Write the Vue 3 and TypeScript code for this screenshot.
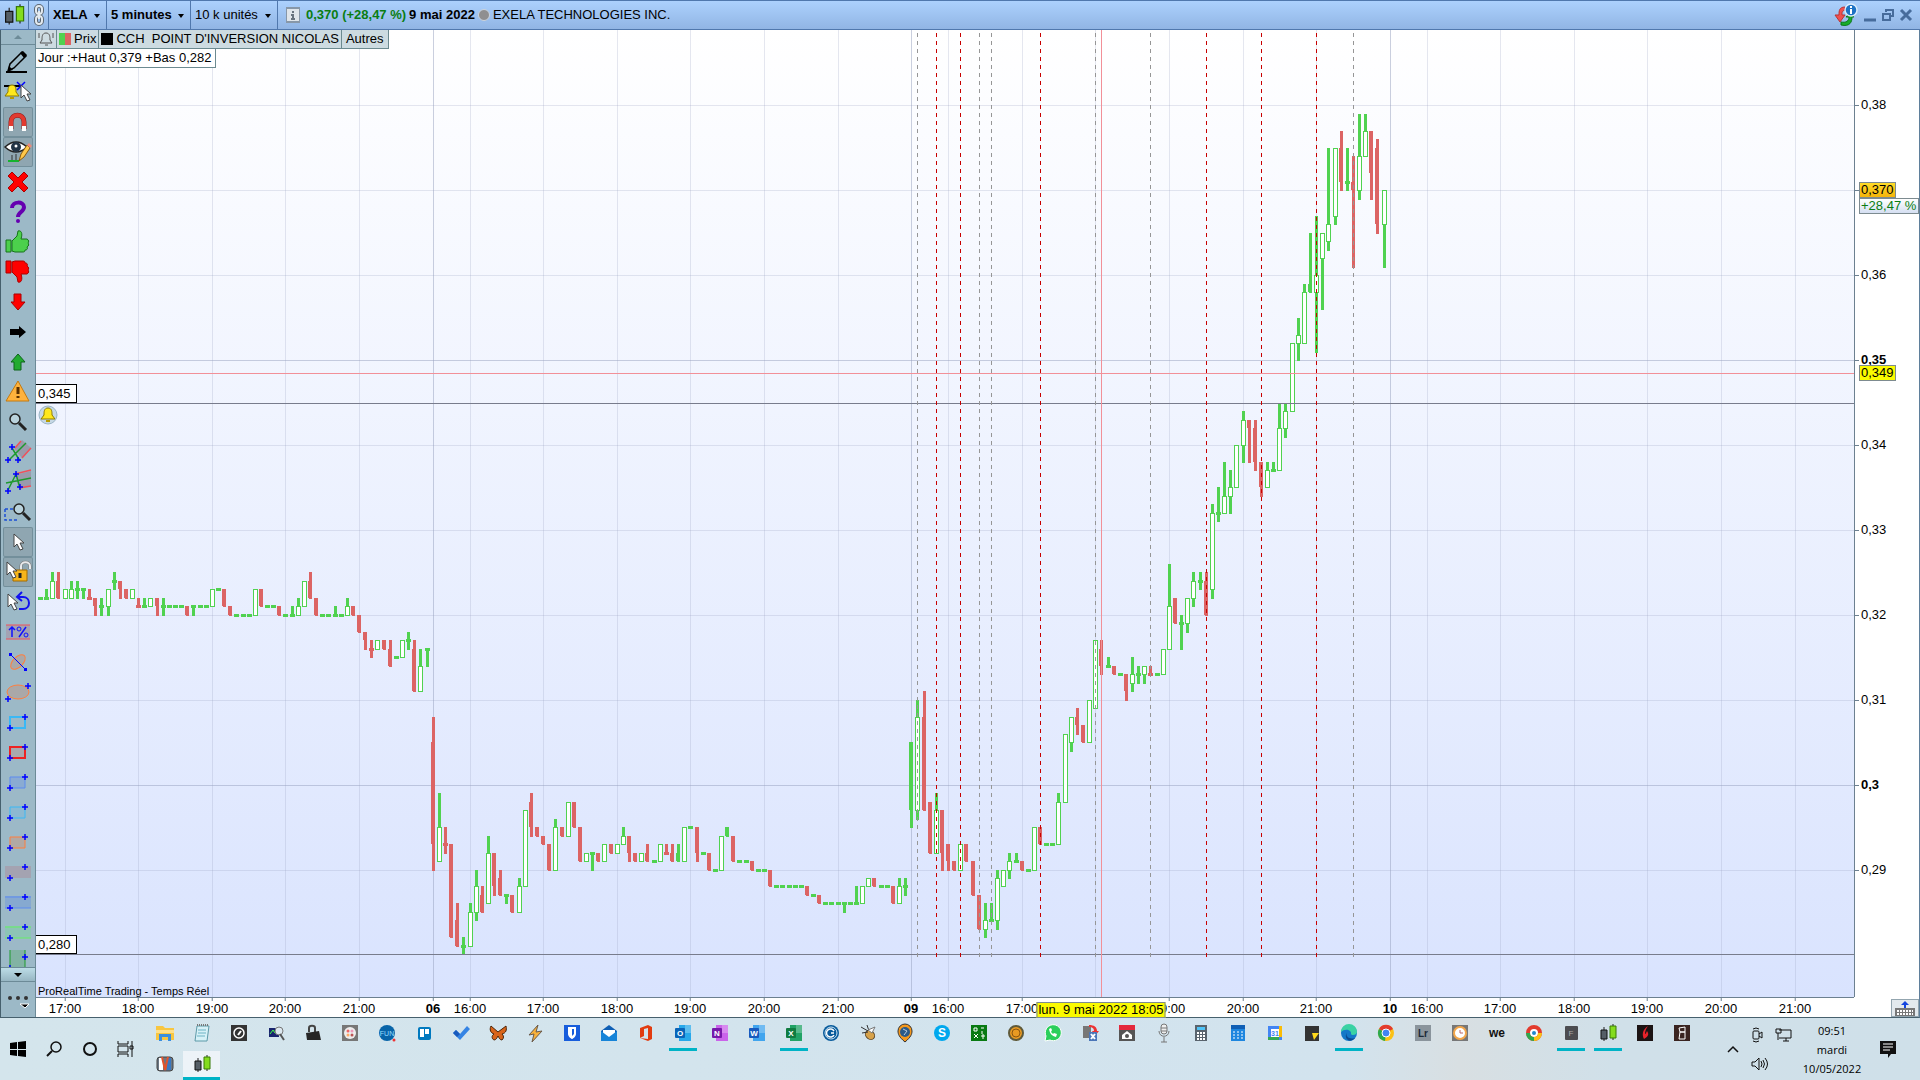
<script setup lang="ts">
import { ref } from 'vue'

type Kind = 'u' | 'd' | 'f'
interface Candle { i: number; kind: Kind; high: number; low: number; top: number; bottom: number }
interface Tool { name: string; art: string; on?: boolean }
interface App { name: string; art: string; open?: boolean }

/* One bar per entry: kind, high, body top, body bottom, low (thousandths).
   u = hollow rising, d = falling, f = filled rising. A bare number is a flat bar. */
const series =
  '322 u323,322,322,322 u325,324,322,322 d325,324,322,322 u323,323,322,322 u324,323,322,322 u324,323,323,322 u323,323,323,322 ' +
  'd323,322,322,322 d322,322,321,320 u322,321,321,320 u323,323,321,320 u325,324,324,323 d324,324,323,322 d323,323,322,322 u323,323,322,322 ' +
  'd322,321,321,321 u322,321,321,321 u322,322,321,321 d322,322,321,320 u322,321,321,320 321 321 321 d321,321,320,320 u321,321,321,320 321 321 ' +
  'u323,323,321,321 323 d323,323,321,321 d321,321,320,320 320 320 320 u323,323,320,320 d323,323,321,321 321 321 d321,321,320,320 320 ' +
  'u321,320,320,320 u322,321,320,320 u324,324,321,321 d325,324,322,322 d322,322,320,320 320 320 u321,320,320,320 320 u322,321,320,320 ' +
  'd321,321,320,320 d320,320,318,318 d318,318,317,316 d317,316,316,315 u317,317,316,316 d317,317,316,316 d317,316,314,314 315 ' +
  'u317,317,315,315 u318,317,317,316 d317,316,311,311 u316,314,311,311 u316,316,316,314 ' +
  'd308,305,293,290 u299,295,291,291 d295,293,293,292 d293,293,282,282 d286,284,281,281 u282,281,281,280 u286,285,281,281 u290,288,285,284 ' +
  'd288,287,285,285 u294,292,286,286 d292,292,288,287 d290,289,287,287 u287,287,287,286 d287,287,285,285 u289,288,285,285 u297,297,288,288 ' +
  'd299,298,295,294 d295,295,294,294 d294,294,293,293 d293,293,290,290 u296,295,290,290 d295,295,294,294 u298,298,294,294 d298,298,295,295 ' +
  'd295,295,291,291 u292,292,291,291 u292,292,292,290 d292,292,291,291 u293,293,291,291 d293,293,292,292 u293,293,292,292 u295,294,293,293 ' +
  'd294,294,292,291 d292,292,291,291 u292,292,291,291 d293,292,291,291 291 u293,293,291,291 d293,292,292,292 d293,292,291,291 f293,292,291,291 ' +
  'u295,295,291,291 295 d295,295,292,291 292 d292,292,290,290 290 u294,294,290,290 f295,295,294,294 d294,294,291,291 291 291 d291,291,290,290 ' +
  '290 290 d290,290,288,288 288 288 288 288 288 d288,288,287,287 287 d287,287,286,286 286 286 286 u286,286,286,285 286 u288,286,286,286 ' +
  'u288,288,286,286 u289,289,288,288 d289,289,288,288 288 288 d288,288,286,286 u289,288,286,286 u289,288,288,287 ' +
  'f305,305,297,295 u310,308,297,296 d311,308,297,297 d298,298,292,292 u299,297,292,292 d297,297,292,290 d293,293,291,290 d291,291,290,290 ' +
  'u293,293,290,290 d293,293,291,291 d291,291,287,287 d287,287,283,283 u286,284,283,282 u286,284,284,284 u290,289,284,283 u290,290,288,288 ' +
  'u292,291,290,289 u292,291,291,291 d291,291,290,290 290 u295,295,290,290 d295,295,293,293 293 293 u299,298,293,293 u306,306,298,298 ' +
  'u308,308,305,304 d309,308,307,306 d307,307,305,305 u310,310,305,305 u317,317,309,309 d317,316,314,313 u315,314,314,314 d314,314,313,313 ' +
  '313 d313,313,311,310 u315,313,312,311 u314,313,313,312 u314,314,313,312 d314,313,313,313 313 u316,316,313,313 u326,321,316,316 ' +
  'd322,322,319,319 u320,319,319,316 u322,322,319,318 u325,324,322,321 u325,324,324,323 d325,324,320,320 u333,332,323,322 u335,332,332,331 ' +
  'u338,334,332,332 u337,335,334,332 u340,340,335,335 u344,343,340,338 d343,343,342,338 d343,342,338,337 d338,338,335,334 u338,337,335,335 ' +
  'u338,337,337,337 u345,342,337,337 u345,344,342,341 u352,352,344,344 u355,353,352,350 u359,358,352,352 f365,359,358,358 u367,360,358,351 ' +
  'u365,365,362,356 u375,366,364,363 u375,375,367,366 d377,375,371,370 u375,371,371,370 d374,371,370,361 u379,374,370,369 u379,377,374,374 ' +
  'd377,377,372,369 d376,375,366,365 u370,370,366,361'

const FIRST = -64
const candles: Candle[] = series.split(' ').map((s, n) => {
  const kind = (/^[udf]/.test(s) ? s[0] : 'u') as Kind
  const v = s.replace(/^[udf]/, '').split(',').map(Number)
  const [high, top, bottom, low] = v.length === 1 ? [v[0], v[0], v[0], v[0]] : v
  return { i: n + FIRST, kind, high, top, bottom, low }
})

/* Plot coordinate system */
const W = 1818
const H = 967
const px = (i: number) => Math.floor(397.2 + 6.135 * i)
const py = (t: number) => Math.floor(755.1 - (t - 300) * 8.49)
const pctX = (i: number) => (px(i) / W) * 100 + '%'
const pctY = (t: number) => (py(t) / H) * 100 + '%'

const hourTicks: { i: number; label: string; day?: boolean }[] = []
for (let h = 0; h < 5; h++) hourTicks.push({ i: -60 + h * 12, label: `${17 + h}:00` })
;['06', '09', '10'].forEach((d, n) => {
  hourTicks.push({ i: n * 78, label: d, day: true })
  for (let h = 0; h < 6; h++) hourTicks.push({ i: n * 78 + 6 + h * 12, label: `${16 + h}:00` })
})
/* The hour next to the pointer is covered by its date flag */
const POINTER = 109
const hourLabels = hourTicks.filter((h) => Math.abs(h.i - POINTER) > 3)

const priceTicks = [380, 370, 360, 350, 340, 330, 320, 310, 300, 290].map((t) => ({
  t,
  label: t === 370 ? '' : ('0,' + t / 10).replace('0,30', '0,3'),
  strong: t === 350 || t === 300,
}))

const greyMarks = [79, 89, 91, 108, 117, 150]
const redMarks = [82, 86, 99, 126, 135, 144]

/* Drawing toolbar */
const plus = (x: number, y: number) => `<path d="M${x - 3} ${y}h6M${x} ${y - 3}v6" stroke="#00f" stroke-width="1.5"/>`
const box = (stroke: string, fill: string, w = 1) =>
  `<path d="M7 10h15v11H7z" fill="${fill}" stroke="${stroke}" stroke-width="${w}"/>${plus(22, 10)}${plus(7, 21)}`
const cursor = (x: number, y: number) =>
  `<path d="M${x} ${y}v13l3-3 3 6 3-1-3-6h4z" fill="#fff" stroke="#444"/>`
const bell = '<path d="M9 8c-4 0-4 4-4 7l-3 4h14l-3-4c0-3 0-7-4-7z" fill="#ffe81c" stroke="#8c7a00"/><path d="M7 20h4v2h-4z" fill="#b89c00"/>'
const thumb = 'M3 13h5v12H3zM9 24V14l5-5 1-5c3-1 5 2 3 8h6c2 1 2 3 1 4 1 1 1 3-1 4 1 2 0 3-2 3 0 2-1 2-3 2H12z'
const lens = (x: number, y: number) =>
  `<path d="M${x + 4} ${y + 4}l7 7" stroke="#222" stroke-width="3"/><circle cx="${x}" cy="${y}" r="5" fill="#b9d2dc" stroke="#222" stroke-width="1.5"/>`

const tools: Tool[] = [
  { name: 'Crayon', art: '<path d="M3 25h21" stroke="#000" stroke-width="2"/><path d="M5 24l2-7L19 5l4 4L11 21z" fill="#9cb9c7" stroke="#000" stroke-width="1.5"/><path d="M17 6l3-2 4 4-3 3zM5 24l1-5 4 4z" fill="#000"/>' },
  { name: 'Alarme', art: '<path d="M1 9h17" stroke="#000" stroke-width="2"/>' + bell + '<path d="M14 5l8 8M22 5l-8 8" stroke="#00f" stroke-width="1.5"/>' + cursor(18, 8) },
  { name: 'Aimant', on: true, art: '<path d="M8 22v-7c0-9 13-9 13 0v7" fill="none" stroke="#8d2020" stroke-width="5"/><path d="M8 22v-7c0-9 13-9 13 0v7" fill="none" stroke="#e23a30" stroke-width="4"/><path d="M6 19h4v5H6zM19 19h4v5h-4z" fill="#fff"/>' },
  { name: 'Afficher les objets', on: true, art: '<path d="M2 10q11-10 22 0-11 10-22 0z" fill="#fff" stroke="#222" stroke-width="1.5"/><circle cx="13" cy="10" r="5" fill="#234"/><circle cx="13" cy="9" r="1.5" fill="#fff"/><path d="M5 24h11" stroke="#16b22e" stroke-width="2"/><path d="M9 18v5M13 17v6" stroke="#333"/><path d="M16 24l2-7 6-9 3 3-6 9z" fill="#ffc84a" stroke="#8a5a10"/><path d="M24 8l2-2 3 3-2 2z" fill="#e98a7c"/>' },
  { name: 'Supprimer', art: '<path d="M5 9l4-4 6 6 6-6 4 4-6 6 6 6-4 4-6-6-6 6-4-4 6-6z" fill="#f00" stroke="#a00"/>' },
  { name: 'Aide', art: '<path d="M9 11c0-7 12-7 12-1 0 5-6 5-6 10" fill="none" stroke="#6500b0" stroke-width="4"/><circle cx="15" cy="24" r="2" fill="#6500b0"/>' },
  { name: 'Pouce haut', art: `<path d="${thumb}" fill="#4cd04c" stroke="#16731a"/>` },
  { name: 'Pouce bas', art: `<g transform="matrix(1 0 0 -1 0 29)"><path d="${thumb}" fill="#f00" stroke="#a00"/></g>` },
  { name: 'Flèche bas', art: '<path d="M11 7h7v8h4l-7 8-7-8h3z" fill="#f00" stroke="#a00"/>' },
  { name: 'Flèche droite', art: '<path d="M7 12h9V9l7 6-7 6v-3H7z" fill="#000"/>' },
  { name: 'Flèche haut', art: '<path d="M11 23h7v-8h4l-7-8-7 8h3z" fill="#22ab30" stroke="#0c651a"/>' },
  { name: 'Attention', art: '<path d="M15 4L26 24H3z" fill="#ffb23c" stroke="#c47a10" stroke-linejoin="round"/><path d="M15 10v7M15 19v2" stroke="#5b3000" stroke-width="3"/>' },
  { name: 'Loupe', art: lens(12, 12) },
  { name: 'Canal', art: '<path d="M11 12l8-9 9 8-9 10z" fill="#9a9aac"/><path d="M12 11l6-7M19 21l9-10" stroke="#f0505a" stroke-width="1.5"/><path d="M6 23l17-17M9 11l8 13" stroke="#1d9a2c" stroke-width="1.5"/>' + plus(9, 10) + plus(5, 23) + plus(15, 23) },
  { name: 'Fourchette', art: '<path d="M12 8l16-4v15l-12 3z" fill="#9a9aac"/><path d="M12 7l16-4M16 21l12-2" stroke="#f0505a" stroke-width="1.5"/><path d="M5 23l8-16 4 14M3 16l25-5" stroke="#1d9a2c" stroke-width="1.5" fill="none"/>' + plus(13, 7) + plus(5, 24) + plus(17, 20) },
  { name: 'Zoom sur zone', art: '<path d="M2 12v11h14M2 12h8" fill="none" stroke="#1b4fd6" stroke-width="1.5" stroke-dasharray="3 2"/>' + lens(16, 12) },
  { name: 'Curseur', on: true, art: cursor(11, 7) },
  { name: 'Verrou', on: true, art: '<path d="M18 14V9c0-5 9-5 9 0v3" fill="none" stroke="#777" stroke-width="3"/><path d="M18 14V9c0-5 9-5 9 0v3" fill="none" stroke="#e8eaec" stroke-width="2"/><path d="M10 13h14v11H10z" fill="#f7b51a" stroke="#a36b00"/><path d="M17 16v5" stroke="#222" stroke-width="3"/>' + cursor(4, 5) },
  { name: 'Annuler', art: '<path d="M15 10h5c8 0 8 12 0 12h-4M19 5l-5 5 5 4" fill="none" stroke="#1111f0" stroke-width="2"/>' + cursor(5, 7) },
  { name: 'Variation', art: '<path d="M3 8h24v14H3z" fill="#a3a3b3"/><path d="M3 8h24M3 22h24" stroke="#f0505a"/><path d="M9 20V10M6 13l3-3 3 3M16 20l7-10" stroke="#11f" stroke-width="1.5" fill="none"/><circle cx="16" cy="12" r="2" fill="none" stroke="#11f"/><circle cx="23" cy="18" r="2" fill="none" stroke="#11f"/>' },
  { name: 'Ellipse inclinée', art: '<ellipse cx="15" cy="15" rx="9" ry="5" transform="rotate(-45 15 15)" fill="#aaa8a8" stroke="#ff7f3f"/><path d="M7 7l16 16" stroke="#00f"/><path d="M6 6h3v3H6zM21 21h3v3h-3z" fill="#00f"/>' },
  { name: 'Ellipse', art: '<ellipse cx="15" cy="15" rx="11" ry="7" fill="#aaa8a8" stroke="#ff7f3f"/>' + plus(25, 9) + plus(5, 22) },
  { name: 'Rectangle bleu', art: box('#3ab8f5', 'none', 2) },
  { name: 'Rectangle rouge', art: box('#e22', '#a9a8ae', 2) },
  { name: 'Zone bleue', art: box('#5c8bf0', '#8aabd2') },
  { name: 'Zone cyan', art: box('#3ab8f5', '#8db9d1') },
  { name: 'Zone orange', art: box('#ff7f3f', '#b2a9a4') },
  { name: 'Bande grise', art: '<path d="M2 9h26v12H2z" fill="#a4a3b1"/>' + plus(22, 10) + plus(7, 21) },
  { name: 'Bande bleue', art: '<path d="M2 9h26v12H2z" fill="#86a9d0"/><path d="M2 10h26M2 21h26" stroke="#5c8bf0"/>' + plus(22, 10) + plus(7, 21) },
  { name: 'Bande verte', art: '<path d="M2 9h26v12H2z" fill="#8dc4b5"/><path d="M2 10h26M2 21h26" stroke="#64f064"/>' + plus(22, 10) + plus(7, 21) },
  { name: 'Bande verticale', art: '<path d="M7 3h15v26H7z" fill="#82b3a4"/><path d="M7 3v26M22 3v26" stroke="#1d9a2c"/>' + plus(22, 10) + plus(7, 21) },
]

/* Taskbar applications, 20x20 art */
const lettered = (c: string, c2: string, l: string) =>
  `<path d="M6 2h12v16H6z" fill="${c2}"/><path d="M12 2h6v8h-6z" fill="#fff" opacity=".25"/><rect x="2" y="5" width="10" height="10" rx="1" fill="${c}"/><text x="7" y="13" font-size="8" font-weight="700" text-anchor="middle" fill="#fff">${l}</text>`
const bars =
  '<path d="M6 4v14M15 1v16" stroke="#222"/><path d="M3 7h6v9H3z" fill="#555e66" stroke="#111"/><path d="M12 3h6v12h-6z" fill="#84dc1e" stroke="#397a05"/>'
const tile = (bg: string, inner: string) => `<path d="M2 2h16v16H2z" fill="${bg}"/>${inner}`

const apps: App[] = [
  { name: 'Explorateur', art: '<path d="M1 3h7l2 2h9v12H1z" fill="#f8c640"/><path d="M1 7h18v3H1z" fill="#ffe08a"/><path d="M4 18v-7h12v7h-3v-4H7v4z" fill="#3a8fe0"/>' },
  { name: 'Bloc-notes', art: '<path d="M5 3h12l-2 15H3z" fill="#d6f1f7" stroke="#5d9aa8"/><path d="M6 7h8M6 10h8M5 13h8" stroke="#6db3c4"/><path d="M5 2h12" stroke="#777" stroke-dasharray="1 1" stroke-width="2"/>' },
  { name: 'Vitesse', art: tile('#333', '<circle cx="10" cy="10" r="5" fill="none" stroke="#fff" stroke-width="1.5"/><path d="M9 12l3-4" stroke="#fff" stroke-width="2"/>') },
  { name: 'Moniteur', art: '<path d="M3 5h10v9H3z" fill="#18246e"/><path d="M4 11l3-4 2 3 3-4" stroke="#4f4" fill="none"/><circle cx="13" cy="8" r="4" fill="#dde8f0" stroke="#777"/><path d="M14 11l4 6" stroke="#555" stroke-width="2"/>' },
  { name: 'Coffre', art: '<path d="M6 9V5c0-3 6-3 6 0v4" fill="none" stroke="#444" stroke-width="2"/><path d="M3 10l13-2 2 9H4z" fill="#262626"/>' },
  { name: 'Peinture', art: tile('#777', '<circle cx="10" cy="10" r="6" fill="#eee"/><circle cx="8" cy="8" r="1.5" fill="#e66"/><circle cx="12" cy="8" r="1.5" fill="#e9b"/><circle cx="12" cy="12" r="1.5" fill="#b55"/><circle cx="8" cy="12" r="1.5" fill="#fa6"/>') },
  { name: 'FUN', art: '<circle cx="10" cy="10" r="8" fill="#0864a8"/><text x="10" y="13" font-size="7" text-anchor="middle" fill="#9df">FUN</text><circle cx="17" cy="17" r="1.5" fill="#e33"/>' },
  { name: 'Trello', art: '<rect x="4" y="4" width="13" height="13" rx="2" fill="#0079bf"/><path d="M6 6h4v8H6zM11 6h4v5h-4z" fill="#fff"/>' },
  { name: 'To Do', art: '<path d="M2 10l3-3 4 4 7-8 3 3-10 11z" fill="#3584e4"/><path d="M2 10l3-3 4 4-3 3z" fill="#185abd"/>' },
  { name: 'Papillon', art: '<path d="M10 9L3 3c-2 4 0 7 3 8-3 2-2 5 0 6 2 0 3-2 4-4 1 2 2 4 4 4 2-2 2-4 0-6 4-1 5-4 4-8z" fill="#d9641a" stroke="#4b2408"/>' },
  { name: 'Winamp', art: '<path d="M13 2L4 12l5-1-2 8 10-11-6 1z" fill="#f8b13a" stroke="#6a5a4a"/>' },
  { name: 'Bitwarden', art: tile('#175ddc', '<path d="M6 4h8v7c0 3-4 5-4 5s-4-2-4-5z" fill="#fff"/><path d="M10 6h2v5l-2 2z" fill="#175ddc"/>') },
  { name: 'Courrier', art: '<path d="M2 8l8-6 8 6v9H2z" fill="#0f5fb5"/><path d="M4 7h12v4l-6 4-6-4z" fill="#fff"/><path d="M2 8l8 6 8-6v10H2z" fill="#1784d8"/>' },
  { name: 'Office', art: '<path d="M4 5l8-3 4 2v12l-4 2-8-3 8 1V5L8 6v7l-4 2z" fill="#e23c10"/>' },
  { name: 'Outlook', open: true, art: lettered('#0a64b8', '#28a8ea', 'O') },
  { name: 'OneNote', art: lettered('#7719aa', '#ca64ea', 'N') },
  { name: 'Word', art: lettered('#185abd', '#41a5ee', 'W') },
  { name: 'Excel', open: true, art: lettered('#107c41', '#21a366', 'X') },
  { name: 'Cercle C', art: '<circle cx="10" cy="10" r="8" fill="#075a9b"/><circle cx="10" cy="10" r="6" fill="none" stroke="#cfe6f5"/><path d="M13 8a4 4 0 1 0 0 4M13 10h-3" stroke="#fff" stroke-width="1.5" fill="none"/>' },
  { name: 'Abeille', art: '<ellipse cx="12" cy="12" rx="5" ry="4" transform="rotate(40 12 12)" fill="#d7a24a" stroke="#5c4320"/><path d="M3 4l7 4M9 2l2 6M4 10l6-1" stroke="#333"/><path d="M10 7l7-3-3 6z" fill="#fff" stroke="#777"/>' },
  { name: 'Géo', art: '<path d="M10 19C4 14 3 11 3 8a7 7 0 0 1 14 0c0 3-1 6-7 11z" fill="#f5981c" stroke="#333"/><circle cx="10" cy="9" r="5" fill="#2b5a88"/><path d="M8 6l4 2-3 4" stroke="#bcd" fill="none"/>' },
  { name: 'Skype', art: '<circle cx="10" cy="10" r="8" fill="#00a8ee"/><text x="10" y="14" font-size="12" font-weight="700" text-anchor="middle" fill="#fff">S</text>' },
  { name: 'Labyrinthe', art: tile('#087a12', '<path d="M5 5h3v3H5zM12 5h3M13 8v3M5 11l4 4M9 11l-4 4M12 13h4M14 11v5" stroke="#fff" fill="none"/>') },
  { name: 'Pièce', art: '<circle cx="10" cy="10" r="7" fill="#e89a22" stroke="#5f5a3a" stroke-width="2"/><circle cx="10" cy="10" r="4" fill="none" stroke="#8a5610"/>' },
  { name: 'WhatsApp', art: '<path d="M2 18l1-5a8 8 0 1 1 4 4z" fill="#2bcf5b" stroke="#fff"/><path d="M6 6c1 5 3 7 7 8l1-3-3-1-1 1-2-2 1-2-1-2z" fill="#fff"/>' },
  { name: 'PDF', art: '<path d="M3 3h8v12H3z" fill="#777"/><path d="M9 2c5 0 8 2 8 6h2l-4 5-3-5h2c0-3-2-4-5-4z" fill="#e33"/><path d="M9 9h8v9H9z" fill="#4b76b8"/><path d="M11 11l4 5M15 11l-4 5" stroke="#fff" stroke-width="2"/>' },
  { name: 'Serrure', art: tile('#555', '<path d="M2 2h16v5H2z" fill="#e4283c"/><path d="M5 12l5-4 5 4v4H5z" fill="#fff"/><circle cx="10" cy="13" r="2" fill="#555"/>') },
  { name: 'Micro', art: '<rect x="7" y="1" width="6" height="10" rx="3" fill="#eee" stroke="#777"/><path d="M5 8c0 7 10 7 10 0M10 14v5M7 19h6M7 5h6M7 8h6" fill="none" stroke="#777"/>' },
  { name: 'Calculatrice', art: '<path d="M4 2h12v16H4z" fill="#59636d"/><path d="M6 4h8v3H6z" fill="#4fc3f7"/><path d="M6 10h8M6 13h8M6 16h8" stroke="#fff" stroke-dasharray="2 1" stroke-width="2"/>' },
  { name: 'Calendrier', art: '<path d="M3 4h14v14H3z" fill="#1d86df"/><path d="M3 2h14v4H3z" fill="#0f5fb5"/><path d="M5 9h10M5 12h10M5 15h10" stroke="#fff" stroke-dasharray="2 2"/>' },
  { name: 'Agenda', art: '<path d="M3 3h14v14H3z" fill="#4285f4"/><path d="M14 3h3v11h-3z" fill="#fbbc04"/><path d="M3 14h11v3H3z" fill="#34a853"/><path d="M6 6h8v8H6z" fill="#fff"/><text x="10" y="13" font-size="7" font-weight="700" text-anchor="middle" fill="#4285f4">31</text>' },
  { name: 'Notes', art: '<path d="M3 3h14v15H3z" fill="#333"/><path d="M10 10h7l-5 7z" fill="#ffd91c"/>' },
  { name: 'Edge', open: true, art: '<circle cx="10" cy="10" r="8" fill="#1478c8"/><path d="M2 9a8 8 0 0 1 16 0c0 3-5 4-6 2 1-4-6-6-10-2z" fill="#3ad2a4"/><path d="M8 9c-2 4 2 8 8 6-5 6-12 1-8-6z" fill="#0b4a92"/>' },
  { name: 'Chrome', art: '<circle cx="10" cy="10" r="8" fill="#fbc116"/><path d="M10 10L3 6a8 8 0 0 1 14 0z" fill="#e33b2e"/><path d="M10 10L3 6a8 8 0 0 0 6 12z" fill="#2da94f"/><circle cx="10" cy="10" r="4" fill="#4285f4" stroke="#fff"/>' },
  { name: 'Lightroom', art: tile('#8a949c', '<text x="10" y="14" font-size="10" font-weight="700" text-anchor="middle" fill="#1c2a38">Lr</text>') },
  { name: 'Horloge', art: tile('#777', '<circle cx="10" cy="10" r="6" fill="#fff" stroke="#f3a64a" stroke-width="2"/><path d="M10 7v3h3" stroke="#b66" fill="none"/>') },
  { name: 'we', art: '<text x="10" y="14" font-size="12" font-weight="700" text-anchor="middle" fill="#111">we</text>' },
  { name: 'Spirale', art: '<circle cx="10" cy="10" r="6" fill="#fff" stroke="#e33b2e" stroke-width="4"/><path d="M4 10a6 6 0 0 0 6 6" stroke="#2da94f" stroke-width="4" fill="none"/><path d="M10 16a6 6 0 0 0 6-6" stroke="#fbc116" stroke-width="4" fill="none"/><circle cx="10" cy="10" r="2" fill="#28c"/>' },
  { name: 'F', open: true, art: '<rect x="4" y="3" width="13" height="14" rx="1" fill="#4c4c50"/><text x="10" y="13" font-size="8" text-anchor="middle" fill="#aaa">F</text>' },
  { name: 'ProRealTime', open: true, art: bars },
  { name: 'Flamme', art: tile('#1c1414', '<path d="M13 3c-6 4-6 9-4 13 3-2 6-4 3-8-1 2-1 3-2 3 0-3 1-5 3-8z" fill="#e8222a"/>') },
  { name: 'B', art: tile('#3a2420', '<path d="M7 5l6-1v5H8zM8 9h5v7H7z" fill="none" stroke="#fff"/>') },
]

const symbol = ref('XELA')
const period = ref('5 minutes')
const units = ref('10 k unités')
</script>

<template>
  <div class="desktop">
    <header class="titlebar">
      <span class="cell logo"><svg width="24" height="24" viewBox="0 0 20 20" v-html="bars" /></span>
      <button class="cell chain" aria-label="Lier les fenêtres">
        <svg width="14" height="22" viewBox="0 0 14 22" fill="none" stroke="#5c6772" stroke-width="4">
          <rect x="4" y="2" width="6" height="8" rx="3" /><rect x="4" y="12" width="6" height="8" rx="3" />
          <g stroke="#e3eaf0" stroke-width="2"><rect x="4" y="2" width="6" height="8" rx="3" /><rect x="4" y="12" width="6" height="8" rx="3" /><path d="M7 7v8" /></g>
        </svg>
      </button>
      <label class="cell drop symbol"><select v-model="symbol" aria-label="Valeur"><option>XELA</option></select></label>
      <label class="cell drop period"><select v-model="period" aria-label="Unité de temps"><option>5 minutes</option></select></label>
      <label class="cell drop units"><select v-model="units" aria-label="Historique"><option>10 k unités</option></select></label>
      <div class="quote">
        <svg width="14" height="16" viewBox="0 0 14 16"><path d="M0 1h14v14H0z" fill="#dfe5ea" stroke="#8797a8" stroke-width="2" /><path d="M7 4v2M5 8h2v4M5 12h4" stroke="#68737e" stroke-width="2" fill="none" /></svg>
        <b class="up">0,370 (+28,47 %)</b>
        <b>9 mai 2022</b>
        <i class="dot"></i>
        <span>EXELA TECHNOLOGIES INC.</span>
      </div>
      <div class="window-buttons">
        <svg width="26" height="26" viewBox="0 0 26 26">
          <path d="M12 5C6 5 6 9 6 13H2l5 7 5-7H9c0-3 0-4 3-5z" fill="#ef5050" stroke="#b33" />
          <path d="M8 23c9 2 11-3 11-8h2l-4-4-4 4h3c0 4-3 6-8 5z" fill="#18ad28" stroke="#0b751a" />
          <circle cx="18" cy="8" r="6" fill="#1d72c4" stroke="#dcebfa" stroke-width="1.5" /><path d="M18 4v2M18 7v5" stroke="#fff" stroke-width="2" />
        </svg>
        <button aria-label="Réduire"><svg width="14" height="14" viewBox="0 0 14 14"><path d="M1 12h12" stroke="#476c9c" stroke-width="3" /></svg></button>
        <button aria-label="Restaurer"><svg width="14" height="14" viewBox="0 0 14 14" fill="none" stroke="#476c9c" stroke-width="2"><path d="M5 4V2h7v6h-2M2 6h7v6H2z" /></svg></button>
        <button aria-label="Fermer"><svg width="14" height="14" viewBox="0 0 14 14"><path d="M2 2l10 10M12 2L2 12" stroke="#476c9c" stroke-width="3" /></svg></button>
      </div>
    </header>

    <main class="workspace">
      <nav class="toolbar" aria-label="Outils de dessin">
        <button class="scroll top" aria-label="Défiler vers le haut"><svg width="10" height="6" viewBox="0 0 10 6"><path d="M5 1l4 4H1z" fill="#6d8b98" /></svg></button>
        <div class="tools">
          <button v-for="t in tools" :key="t.name" :class="['tool', { on: t.on }]" :aria-label="t.name">
            <svg width="30" height="30" viewBox="0 0 30 30" v-html="t.art" />
          </button>
        </div>
        <button class="scroll bottom" aria-label="Défiler vers le bas"><svg width="10" height="6" viewBox="0 0 10 6"><path d="M1 1h8L5 5z" fill="#000" /></svg></button>
        <button class="more" aria-label="Plus">
          <svg width="24" height="20" viewBox="0 0 24 20"><circle cx="4" cy="8" r="2" fill="#333" /><circle cx="12" cy="8" r="2" fill="#333" /><circle cx="20" cy="8" r="2" fill="#333" /><path d="M14 14h9l-4 4z" fill="#000" stroke="#fff" /></svg>
        </button>
      </nav>

      <section class="chart">
        <div class="plot">
          <svg class="canvas" :viewBox="`0 0 ${W} ${H}`" preserveAspectRatio="none" shape-rendering="crispEdges">
            <g class="grid">
              <rect v-for="h in hourTicks" :key="'v' + h.i" :class="{ strong: h.day }" :x="px(h.i)" y="0" width="1" :height="H" />
              <rect v-for="p in priceTicks" :key="'h' + p.t" :class="{ strong: p.strong }" x="0" :y="py(p.t)" :width="W" height="1" />
            </g>
            <g v-for="c in candles" :key="c.i" :class="c.kind">
              <rect :x="px(c.i) - 1" :y="py(c.high)" width="3" :height="py(c.low) - py(c.high) + 1" />
              <rect v-if="c.top === c.bottom" :x="px(c.i) - 2" :y="py(c.top) - 1" width="5" height="3" />
              <rect v-else-if="c.kind === 'u'" class="hollow" :x="px(c.i) - 1.5" :y="py(c.top) + 0.5" width="4" :height="py(c.bottom) - py(c.top)" />
              <rect v-else :x="px(c.i) - 2" :y="py(c.top)" width="4" :height="py(c.bottom) - py(c.top)" />
            </g>
            <rect class="level" x="0" :y="py(345)" :width="W" height="1" />
            <rect class="level" x="0" :y="py(280)" :width="W" height="1" />
            <rect class="cross" x="0" y="343" :width="W" height="1" />
            <rect class="cross" :x="px(POINTER)" y="0" width="1" :height="H" />
            <path v-for="i in greyMarks" :key="'g' + i" class="mark" :d="`M${px(i) + 0.5} 3V927`" />
            <path v-for="i in redMarks" :key="'r' + i" class="mark red" :d="`M${px(i) + 0.5} 3V927`" />
          </svg>
          <div class="legend">
            <div class="tabs">
              <button aria-label="Alarmes"><svg width="16" height="16" viewBox="0 0 16 16" fill="none" stroke="#555"><path d="M8 2c-4 0-4 4-4 7l-2 3h12l-2-3c0-3 0-7-4-7zM7 14h3M1 2v5M15 2v5" /></svg></button>
              <button><i class="swatch duo"></i>Prix</button>
              <button><i class="swatch"></i>CCH&nbsp; POINT D'INVERSION NICOLAS</button>
              <button class="others">Autres</button>
            </div>
            <div class="day-range">Jour :+Haut 0,379 +Bas 0,282</div>
          </div>
          <div class="tag" :style="{ top: pctY(345) }">0,345</div>
          <div class="tag" :style="{ top: pctY(280) }">0,280</div>
          <svg class="alarm" :style="{ top: pctY(345) }" width="20" height="20" viewBox="0 0 20 20">
            <circle cx="10" cy="10" r="9" fill="#c6d8e4" stroke="#9bb5c6" />
            <path d="M10 3c-4 0-4 4-4 7l-3 4h14l-3-4c0-3 0-7-4-7z" fill="#ffe81c" stroke="#8c7a00" /><path d="M8 15h4v2H8z" fill="#b89c00" />
          </svg>
          <div class="credit">ProRealTime Trading - Temps Réel</div>
        </div>

        <div class="price-axis">
          <div v-for="p in priceTicks" :key="p.t" :class="['price', { strong: p.strong }]" :style="{ top: pctY(p.t) }">{{ p.label }}</div>
          <div class="flag last" :style="{ top: pctY(370) }">0,370</div>
          <div class="flag change" :style="{ top: pctY(370) }">+28,47 %</div>
          <div class="flag pointer" :style="{ top: (343 / H) * 100 + '%' }">0,349</div>
        </div>

        <div class="time-axis">
          <div v-for="h in hourLabels" :key="h.i" :class="['time', { strong: h.day }]" :style="{ left: pctX(h.i) }">{{ h.label }}</div>
          <div class="time-flag" :style="{ left: pctX(POINTER) }">lun. 9 mai 2022 18:05</div>
        </div>
        <button class="keyboard" aria-label="Clavier">
          <svg width="22" height="15" viewBox="0 0 22 15"><path d="M11 0l4 4h-3v3h-2V4H7z" fill="#1545e0" /><path d="M1 7h20v8H1z" fill="#777" /><path d="M3 10h16M3 13h16" stroke="#fff" stroke-width="2" stroke-dasharray="2 1" /></svg>
        </button>
      </section>
    </main>

    <footer class="taskbar">
      <div class="system">
        <button aria-label="Démarrer"><svg width="16" height="16" viewBox="0 0 16 16"><path d="M0 2l7-1v7H0zM8 1l8-1v8H8zM0 9h7v6l-7-1zM8 9h8v7l-8-1z" /></svg></button>
        <button aria-label="Rechercher"><svg width="16" height="16" viewBox="0 0 16 16" fill="none" stroke="#111"><circle cx="10" cy="6" r="5" stroke-width="1.5" /><path d="M6 10l-5 5" stroke-width="2" /></svg></button>
        <button aria-label="Cortana"><svg width="16" height="16" viewBox="0 0 16 16"><circle cx="8" cy="8" r="6" fill="none" stroke="#111" stroke-width="2" /></svg></button>
        <button aria-label="Vue des tâches"><svg width="18" height="16" viewBox="0 0 18 16" fill="none" stroke="#111"><path d="M1 0v3h10V0M1 16v-3h10v3M1 5h10v6H1zM15 0v16M13 5h3v3h-3z" /></svg></button>
      </div>
      <div class="apps">
        <div class="row">
          <button v-for="a in apps" :key="a.name" :class="['app', { open: a.open }]" :aria-label="a.name">
            <svg width="20" height="20" viewBox="0 0 20 20" v-html="a.art" />
          </button>
        </div>
        <div class="row second">
          <button class="app" aria-label="Graphiques"><svg width="20" height="20" viewBox="0 0 20 20"><rect x="2" y="3" width="16" height="14" rx="3" fill="#6a7784" stroke="#444" /><path d="M4 4h4v12H4z" fill="#fff" /><path d="M12 4h4v12h-4z" fill="#3a78c0" /><path d="M7 3l3 13 3-13" stroke="#e2522a" stroke-width="2" fill="none" /></svg></button>
          <button class="app active" aria-label="ProRealTime actif"><svg width="20" height="20" viewBox="0 0 20 20" v-html="bars" /></button>
        </div>
      </div>
      <div class="tray">
        <button aria-label="Icônes cachées"><svg width="12" height="8" viewBox="0 0 12 8"><path d="M1 7l5-5 5 5" fill="none" stroke="#111" stroke-width="1.5" /></svg></button>
        <div class="status">
          <svg width="13" height="16" viewBox="0 0 13 16" fill="none" stroke="#111"><rect x="2" y="4" width="6" height="8" rx="1" /><path d="M8 7l3-2v6l-3-2M2 2q3-2 6 0M2 14q3 2 6 0" /></svg>
          <svg width="17" height="16" viewBox="0 0 17 16" fill="none" stroke="#111"><path d="M4 3h12v8H4M8 14h6M11 11v3M1 2h5v4H1zM3 6v7" /></svg>
          <svg width="18" height="14" viewBox="0 0 18 14" fill="none" stroke="#111"><path d="M1 5h3l4-4v12L4 9H1zM10 4q2 3 0 6M12 3q3 4 0 8M14 1q5 6 0 12" /></svg>
        </div>
        <div class="clock"><span>09:51</span><span>mardi</span><span>10/05/2022</span></div>
        <button class="notices" aria-label="Notifications"><svg width="16" height="18" viewBox="0 0 16 18"><path d="M0 1h16v13h-5l-3 4v-4H0z" fill="#111" /><path d="M3 4h10M3 7h10M3 10h7" stroke="#fff" /></svg></button>
      </div>
    </footer>
  </div>
</template>

<style>
body {
  margin: 0;
}
</style>

<style scoped>
* {
  box-sizing: border-box;
}
.desktop {
  display: flex;
  flex-direction: column;
  height: 100vh;
  overflow: hidden;
  font: 13px/16px "Liberation Sans", Arial, sans-serif;
  color: #000;
}
button,
select {
  padding: 0;
  border: 0;
  background: none;
  font: inherit;
  color: inherit;
}
svg {
  display: block;
  flex: none;
}

/* Title bar */
.titlebar {
  display: flex;
  height: 30px;
  flex: none;
  border-top: 1px solid #5078ad;
  border-bottom: 1px solid #5078ad;
  background: linear-gradient(#acd1fd, #91b5e4);
}
.cell {
  display: flex;
  align-items: center;
  justify-content: center;
  border-right: 1px solid #5078ad;
}
.logo {
  width: 29px;
}
.chain {
  width: 20px;
}
.drop {
  position: relative;
}
.drop::after {
  content: "";
  position: absolute;
  right: 6px;
  top: 13px;
  border: 3px solid transparent;
  border-top: 4px solid #000;
  border-bottom: 0;
  pointer-events: none;
}
.drop select {
  width: 100%;
  height: 100%;
  padding-left: 4px;
  appearance: none;
  outline: none;
}
.symbol {
  width: 58px;
  font-weight: 700;
}
.period {
  width: 84px;
  font-weight: 700;
}
.units {
  width: 87px;
}
.quote {
  display: flex;
  flex: 1;
  align-items: center;
  gap: 3px;
  padding-left: 8px;
  white-space: nowrap;
}
.quote svg {
  margin-right: 3px;
}
.up {
  color: #0a7d12;
}
.dot {
  width: 12px;
  height: 12px;
  border: 1px solid #ccd5de;
  border-radius: 50%;
  background: #8f8f90;
}
.window-buttons {
  display: flex;
  align-items: center;
  gap: 4px;
  padding-right: 7px;
}

/* Drawing toolbar */
.workspace {
  display: flex;
  flex: 1;
  min-height: 0;
  border-right: 1px solid #5f7f9b;
  border-bottom: 1px solid #46606d;
}
.toolbar {
  display: flex;
  flex-direction: column;
  flex: none;
  width: 36px;
  border-left: 1px solid #46606d;
  border-right: 1px solid #6c8a97;
  background: #9cb9c7;
}
.scroll,
.more {
  display: flex;
  align-items: center;
  justify-content: center;
  flex: none;
}
.scroll {
  height: 15px;
}
.top {
  border-bottom: 1px solid #6c8a97;
}
.bottom {
  border: 1px solid #6c8a97;
  border-width: 1px 0;
  background: linear-gradient(#bcdce6, #97b6c3);
}
.more {
  height: 35px;
}
.tools {
  display: flex;
  flex: 1;
  flex-direction: column;
  align-items: center;
  min-height: 0;
  padding-top: 2px;
  overflow: hidden;
}
.tool {
  flex: none;
  width: 30px;
  height: 30px;
}
.tool.on {
  border-radius: 2px;
  background: #8fa6b1;
  box-shadow: inset 0 0 0 1px #738f9b;
}

/* Chart */
.chart {
  display: grid;
  flex: 1;
  grid-template: 1fr 20px / 1fr 65px;
  min-width: 0;
  background: #fff;
}
.plot {
  position: relative;
  min-height: 0;
  background: linear-gradient(#ffffff, #d9e3fe);
}
.canvas {
  position: absolute;
  inset: 0;
  width: 100%;
  height: 100%;
}
.grid rect {
  fill: #96a0be;
  opacity: 0.25;
}
.grid .strong {
  opacity: 0.5;
}
.u,
.f {
  fill: #50d250;
}
.d {
  fill: #dc6464;
}
.hollow {
  fill: #fff;
  stroke: #50d250;
}
.level {
  fill: #787c8c;
}
.cross {
  fill: #f29098;
}
.mark {
  stroke: #969696;
  stroke-dasharray: 4 4;
}
.mark.red {
  stroke: #c80000;
}
.legend {
  position: relative;
  display: flex;
  flex-direction: column;
  align-items: flex-start;
}
.tabs {
  display: flex;
  height: 19px;
  border-bottom: 1px solid #6c8a90;
  background: #cddbe1;
}
.tabs button {
  display: flex;
  align-items: center;
  padding: 0 2px 1px 2px;
  border-right: 1px solid #6c8a90;
  white-space: nowrap;
}
.tabs .others {
  padding: 0 4px;
}
.swatch {
  width: 12px;
  height: 12px;
  margin-right: 3px;
  background: #000;
}
.duo {
  background: linear-gradient(90deg, #50d250 50%, #dc6464 50%);
}
.day-range {
  height: 19px;
  padding: 1px 4px 0 2px;
  border: 1px solid #6c8a90;
  border-width: 0 1px 1px 0;
  background: #fff;
}
.tag {
  position: absolute;
  left: 0;
  width: 41px;
  height: 19px;
  padding: 1px 2px;
  border: 1px solid #000;
  border-left: 0;
  background: #fff;
  transform: translateY(-100%);
}
.alarm {
  position: absolute;
  left: 2px;
  margin-top: 2px;
}
.credit {
  position: absolute;
  left: 2px;
  bottom: 0;
  font-size: 11px;
  line-height: 12px;
}
.price-axis {
  position: relative;
  border-left: 1px solid #6c8090;
}
.price {
  position: absolute;
  left: 0;
  height: 16px;
  padding-left: 6px;
  transform: translateY(-50%);
}
.price::before {
  content: "";
  position: absolute;
  left: 0;
  top: 8px;
  width: 4px;
  height: 1px;
  background: #6c8090;
}
.strong {
  font-weight: 700;
}
.flag {
  position: absolute;
  left: 4px;
  height: 16px;
  padding: 0 1px;
  border: 1px solid #7d8b90;
  line-height: 14px;
  white-space: nowrap;
  transform: translateY(-50%);
}
.last {
  background: linear-gradient(#ffdc28, #f5b40a);
}
.change {
  right: 0;
  margin-top: 16px;
  background: linear-gradient(#fff, #d5dff2);
  color: #0a7d12;
}
.pointer {
  background: #fafa00;
}
.time-axis {
  position: relative;
  border-top: 1px solid #6c8090;
}
.time {
  position: absolute;
  top: 3px;
  transform: translateX(-50%);
}
.time::before {
  content: "";
  position: absolute;
  left: 50%;
  top: -3px;
  width: 1px;
  height: 3px;
  background: #6c8090;
}
.time-flag {
  position: absolute;
  top: 4px;
  height: 16px;
  padding: 0 1px;
  border: 1px solid #7d8b90;
  background: #fafa00;
  line-height: 14px;
  white-space: nowrap;
  transform: translateX(-50%);
}
.keyboard {
  display: flex;
  align-self: end;
  align-items: center;
  justify-content: center;
  justify-self: end;
  width: 28px;
  height: 18px;
  border: 1px solid #93a5af;
  background: #e3e9ed;
}

/* Taskbar */
.taskbar {
  display: flex;
  flex: none;
  height: 62px;
  background: linear-gradient(90deg, #d4e5ec, #d2e3ee 70%, #d8dfe2 76%, #d0e0e9 84%, #cfe0e9);
}
.system {
  display: flex;
  width: 146px;
}
.system button {
  display: flex;
  width: 36px;
  align-items: center;
  justify-content: center;
}
.apps {
  flex: 1;
}
.row {
  display: flex;
  height: 33px;
}
.second {
  height: 29px;
}
.app {
  display: flex;
  width: 37px;
  align-items: center;
  justify-content: center;
  border-bottom: 3px solid transparent;
}
.open {
  background: linear-gradient(#00b3c6, #00b3c6) center bottom / 28px 3px no-repeat border-box;
}
.active {
  background: linear-gradient(#00b3c6, #00b3c6) center bottom / 37px 3px no-repeat border-box, #edf3f8;
}
.tray {
  display: flex;
  align-items: center;
  font: 11px/19px "Open Sans", "Segoe UI", sans-serif;
}
.status {
  display: grid;
  grid-template-columns: 17px 17px;
  gap: 14px 7px;
  width: 56px;
  padding-left: 12px;
}
.clock {
  display: flex;
  flex-direction: column;
  width: 74px;
  align-items: center;
  margin-right: 11px;
}
.notices {
  margin-right: 24px;
}
</style>
